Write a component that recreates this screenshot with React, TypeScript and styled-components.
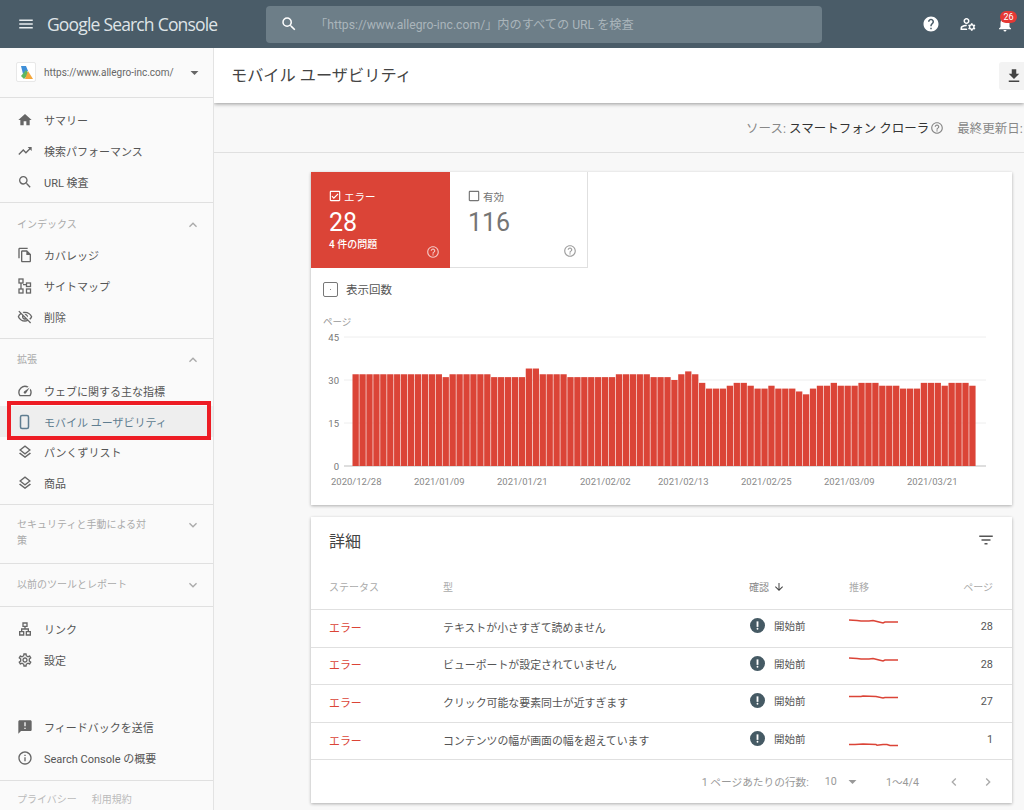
import React from 'react'
import styled, { createGlobalStyle } from 'styled-components'
import {
  MdMenu, MdSearch, MdHelp, MdHelpOutline, MdNotifications, MdOutlineManageAccounts, MdArrowDropDown,
  MdHome, MdTrendingUp, MdExpandLess, MdExpandMore, MdOutlineFileCopy, MdOutlineVisibilityOff, MdOutlineSpeed,
  MdOutlineLayers, MdOutlineLan, MdOutlineSettings, MdAnnouncement, MdInfoOutline,
  MdFileDownload, MdOutlineCheckBox, MdCheckBoxOutlineBlank, MdFilterList, MdArrowDownward, MdPriorityHigh,
  MdChevronLeft, MdChevronRight,
} from 'react-icons/md'

const GlobalStyle = createGlobalStyle`
  html, body { margin: 0; padding: 0; height: 100%; overflow: hidden; }
  body { font-family: Roboto, "Noto Sans CJK JP", sans-serif; background: #f8f8f8; color: #444; }
  * { box-sizing: border-box; }
`

const Page = styled.div`
  width: 1024px;
  height: 810px;
  display: flex;
  flex-direction: column;
  overflow: hidden;
`

const Header = styled.header`
  height: 48px;
  flex: none;
  display: flex;
  align-items: center;
  background: #4a5c68;
  color: #fff;
`

const MenuButton = styled.div`
  width: 47px;
  padding-left: 17px;
  display: flex;
  color: #e8ecee;
`

const Logo = styled.div`
  width: 219px;
  display: flex;
  gap: 4px;
  font-family: "Open Sans", sans-serif;
  font-size: 17.5px;
  letter-spacing: -0.85px;
  color: #dfe4e7;
  white-space: nowrap;
`

const SearchBox = styled.div`
  width: 556px;
  height: 37px;
  display: flex;
  align-items: center;
  gap: 17px;
  padding-left: 14px;
  border-radius: 4px;
  background: #6d7e88;
  color: #fff;
  font-size: 12.2px;
`

const SearchHint = styled.span`
  color: #aab5bb;
`

const HeaderIcons = styled.div`
  margin-left: 100px;
  display: flex;
  align-items: center;
  gap: 19px;
`

const Bell = styled.div`
  position: relative;
  display: flex;
`

const Badge = styled.span`
  position: absolute;
  top: -4px;
  left: 4px;
  width: 17px;
  height: 12px;
  border-radius: 6px;
  background: #e53935;
  color: #fff;
  font-size: 9px;
  line-height: 12px;
  text-align: center;
`

const Body = styled.div`
  flex: 1;
  min-height: 0;
  display: flex;
`

const Sidebar = styled.nav`
  width: 214px;
  flex: none;
  display: flex;
  flex-direction: column;
  background: #fafafa;
  border-right: 1px solid #e3e3e3;
`

const PropertyRow = styled.div`
  height: 50px;
  flex: none;
  display: flex;
  align-items: center;
  padding: 0 9px 1px 16px;
  border-bottom: 1px solid #e0e0e0;
  font-size: 10px;
  color: #666;
`

const Favicon = styled.div`
  width: 20px;
  height: 20px;
  flex: none;
  margin-right: 8px;
  display: flex;
  align-items: center;
  justify-content: center;
  background: #fff;
  border: 1px solid #e8e8e8;
  border-radius: 2px;
`

const PropertyName = styled.span`
  flex: 1;
  white-space: nowrap;
`

const NavGroup = styled.div<{ $top?: number; $bottom?: number }>`
  flex: none;
  padding: ${p => p.$top ?? 0}px 0 ${p => p.$bottom ?? 5.5}px;
  border-bottom: 1px solid #e0e0e0;
`

const PlainGroup = styled.div`
  flex: none;
  padding-top: 7px;
`

const Spacer = styled.div`
  flex: 1;
`

const NavItem = styled.div<{ $active?: boolean }>`
  position: relative;
  height: 30.7px;
  display: flex;
  align-items: center;
  gap: 11px;
  padding-left: 17px;
  font-size: 11px;
  white-space: nowrap;
  color: ${p => (p.$active ? '#5f7d90' : '#555')};
  background: ${p => (p.$active ? '#eeeeee' : 'transparent')};

  svg {
    flex: none;
    color: ${p => (p.$active ? '#5f7d90' : '#666')};
  }
`

const Highlight = styled.div`
  position: absolute;
  left: 7px;
  top: -5.5px;
  width: 204px;
  height: 39px;
  border: 4.5px solid #ed1c24;
  pointer-events: none;
`

const SectionHead = styled.div`
  height: 37px;
  padding: 6px 12px 0 17px;
  display: flex;
  align-items: center;
  justify-content: space-between;
  font-size: 10px;
  line-height: 16px;
  color: #aaa;

  svg {
    flex: none;
    color: #aaa;
  }
`

const CollapsedHead = styled(SectionHead)`
  height: 42px;
  padding-top: 0;
`

const WrappedHead = styled(SectionHead)`
  height: 58px;
  padding: 12px 12px 12px 17px;
  align-items: flex-start;
`

const SectionLabel = styled.span`
  width: 132px;
`

const SideFooter = styled.div`
  flex: none;
  height: 30px;
  margin-top: 7px;
  padding: 10px 0 0 17px;
  display: flex;
  gap: 15px;
  border-top: 1px solid #e0e0e0;
  font-size: 10px;
  color: #bbb;
`

const Main = styled.main`
  flex: 1;
  min-width: 0;
  display: flex;
  flex-direction: column;
  overflow: hidden;
`

const TitleBar = styled.div`
  height: 55px;
  flex: none;
  display: flex;
  align-items: center;
  justify-content: space-between;
  padding: 0 0 0 17px;
  background: #fff;
  box-shadow: 0 1px 4px rgba(0, 0, 0, 0.4);
  z-index: 1;
`

const Title = styled.h1`
  margin: 0 0 3px;
  font-size: 16.2px;
  font-weight: 400;
  color: #444;
`

const DownloadButton = styled.div`
  width: 35px;
  height: 28px;
  flex: none;
  margin-right: -10px;
  padding-left: 6px;
  display: flex;
  align-items: center;
  border-radius: 3px;
  background: #f3f3f3;
  color: #444;
`

const SourceBar = styled.div`
  height: 50px;
  flex: none;
  display: flex;
  align-items: center;
  padding-left: 532px;
  border-bottom: 1px solid #e0e0e0;
  font-size: 12.5px;
  white-space: nowrap;
  color: #333;
`

const Muted = styled.span`
  color: #888;
`

const SourceHelp = styled.span`
  display: flex;
  margin: 0 13px 0 1px;
  color: #888;
`

const Content = styled.div`
  width: 701px;
  margin-left: 97px;
  padding-top: 19px;
  display: flex;
  flex-direction: column;
  gap: 12px;
`

const Card = styled.section`
  background: #fff;
  box-shadow: 0 1px 3px rgba(0, 0, 0, 0.3);
`

const Tabs = styled.div`
  display: flex;
`

const Tab = styled.div<{ $error?: boolean }>`
  position: relative;
  width: ${p => (p.$error ? 139 : 138)}px;
  height: 96px;
  padding: 17px 0 0 17px;
  background: ${p => (p.$error ? '#db4437' : '#fff')};
  color: ${p => (p.$error ? '#fff' : '#757575')};
  border-right: ${p => (p.$error ? 'none' : '1px solid #e0e0e0')};
  border-bottom: ${p => (p.$error ? 'none' : '1px solid #e0e0e0')};
`

const TabLabel = styled.div`
  display: flex;
  align-items: center;
  gap: 2px;
  height: 14px;
  font-size: 10.5px;
`

const TabValue = styled.div`
  margin: 3px 0 0 1px;
  font-size: 25px;
  line-height: 33px;
`

const TabNote = styled.div`
  margin-left: 1px;
  font-size: 10px;
  font-weight: 500;
  line-height: 12px;
`

const TabHelp = styled.span`
  position: absolute;
  right: 10px;
  bottom: 9px;
  display: flex;
  opacity: 0.7;
`

const MetricRow = styled.div`
  height: 42px;
  display: flex;
  align-items: center;
  gap: 8px;
  padding-left: 12px;
  font-size: 11.5px;
  color: #555;
`

const MetricBox = styled.span`
  width: 15px;
  height: 15px;
  display: flex;
  align-items: center;
  justify-content: center;
  border: 1.5px solid #777;
  border-radius: 2px;

  &::after {
    content: '';
    width: 1px;
    height: 1px;
    background: #888;
  }
`

const AxisTitle = styled.div`
  height: 20px;
  padding: 6px 0 0 12px;
  font-size: 9.5px;
  line-height: 12px;
  color: #999;
`

const Chart = styled.svg`
  display: block;
  margin-bottom: 10px;
  font-family: Roboto, sans-serif;
  font-size: 9.5px;
`

const CardHead = styled.div`
  height: 48px;
  display: flex;
  align-items: center;
  justify-content: space-between;
  padding: 0 17px 3px 18px;
  color: #555;
`

const CardTitle = styled.h2`
  margin: 0;
  font-size: 16px;
  font-weight: 400;
  color: #444;
`

const Columns = styled.div`
  display: grid;
  grid-template-columns: 115px 305px 100px 80px 1fr;
  align-items: center;
  padding: 0 19px 0 18px;
`

const TableHead = styled(Columns)`
  height: 45px;
  padding-bottom: 1px;
  border-bottom: 1px solid #e0e0e0;
  font-size: 10px;
  color: #aaa;
`

const SortHead = styled.span`
  display: flex;
  align-items: center;
  gap: 4px;
  color: #888;

  svg {
    color: #444;
  }
`

const Right = styled.span`
  text-align: right;
`

const Row = styled(Columns)`
  height: 37.6px;
  padding-bottom: 3px;
  border-bottom: 1px solid #e0e0e0;
  font-size: 10.9px;
  color: #555;
`

const StatusError = styled.span`
  color: #db4437;
`

const TypeName = styled.span`
  margin-left: -1px;
`

const Pending = styled.span`
  display: flex;
  align-items: center;
  gap: 9px;
  margin: -2px 0 0 1px;
  font-size: 10.5px;
`

const PendingDot = styled.span`
  width: 15px;
  height: 15px;
  display: flex;
  align-items: center;
  justify-content: center;
  border-radius: 50%;
  background: #455a64;
  color: #fff;
`

const Spark = styled.svg`
  display: block;
  align-self: start;
  margin-bottom: -8px;
`

const Pager = styled.div`
  height: 43px;
  display: flex;
  align-items: center;
  justify-content: flex-end;
  padding-right: 16px;
  font-size: 10.7px;
  color: #999;
`

const PageSize = styled.span`
  display: flex;
  align-items: center;
  gap: 6px;
  margin: 0 24px 0 16px;
`

const PagerNav = styled.span`
  display: flex;
  gap: 18px;
  margin-left: 27px;
  color: #aaa;
`

const bars = [
  32, 32, 32, 32, 32, 32, 32, 32, 32, 32, 32, 32, 32, 31, 32, 32, 32, 32, 32, 32, 31, 31, 31, 31, 31, 34, 34, 32, 32, 32,
  32, 31, 31, 31, 31, 31, 31, 31, 32, 32, 32, 32, 32, 31, 31, 31, 30, 32, 33, 32, 29, 27, 27, 27, 28, 29, 29, 28, 27, 27,
  28, 27, 27, 27, 26, 25, 27, 28, 28, 29, 28, 28, 28, 29, 29, 29, 28, 28, 28, 27, 27, 27, 29, 29, 29, 28, 29, 29, 29, 28,
]

const ticks = [
  { label: '45', y: 7 },
  { label: '30', y: 50 },
  { label: '15', y: 93 },
  { label: '0', y: 136 },
]

const dates = [
  { label: '2020/12/28', x: 20 },
  { label: '2021/01/09', x: 103 },
  { label: '2021/01/21', x: 186 },
  { label: '2021/02/02', x: 269 },
  { label: '2021/02/13', x: 347 },
  { label: '2021/02/25', x: 430 },
  { label: '2021/03/09', x: 513 },
  { label: '2021/03/21', x: 596 },
]

const BarChart = () => (
  <Chart width={701} height={165}>
    {ticks.map(t => (
      <g key={t.label}>
        <line x1={33} x2={675} y1={t.y} y2={t.y} stroke={t.y === 136 ? '#bdbdbd' : '#eeeeee'} />
        <text x={28} y={t.y + 3.5} textAnchor="end" fill="#777">{t.label}</text>
      </g>
    ))}
    {bars.map((v, i) => (
      <rect key={i} x={41.5 + i * 6.93} y={136 - v * 2.867} width={6.3} height={v * 2.867} fill="#db4437" />
    ))}
    {dates.map(d => (
      <text key={d.label} x={d.x} y={155} fill="#888">{d.label}</text>
    ))}
  </Chart>
)

const SitemapIcon = () => (
  <svg width="16" height="16" viewBox="0 0 16 16" fill="none" stroke="#666" strokeWidth="1.3">
    <rect x="2" y="1" width="4" height="4" />
    <rect x="2" y="11" width="4" height="4" />
    <rect x="9.5" y="5" width="4" height="3.5" />
    <rect x="9.5" y="11" width="4" height="4" />
    <path d="M4 5v6M6 6.7h3.5" />
  </svg>
)

const PhoneIcon = () => (
  <svg width="16" height="16" viewBox="0 0 16 16" fill="none" stroke="#5f7d90" strokeWidth="1.5">
    <rect x="3.5" y="1.5" width="8" height="13" rx="1.5" />
  </svg>
)

const FaviconMark = () => (
  <svg width="15" height="15" viewBox="0 0 15 15">
    <path d="M2 1h5l2 5-5 3z" fill="#3f8fd8" />
    <path d="M7 5l3 4-5 5-3-3z" fill="#5fb760" />
    <path d="M9 6l5 8H6z" fill="#f4a63a" />
  </svg>
)

const sparkRows = [
  { status: 'テキストが小さすぎて読めません', pages: 28, points: '0,10 8,10.5 12,11 20,11 24,10.5 28,11.5 34,13 36,12 49,12' },
  { status: 'ビューポートが設定されていません', pages: 28, points: '0,10 8,10.5 12,11 20,11 24,10.5 28,11.5 34,13 36,12 49,12' },
  { status: 'クリック可能な要素同士が近すぎます', pages: 27, points: '0,11.5 12,11.5 14,11 27,11.5 34,13 36,12.5 49,12.5' },
  { status: 'コンテンツの幅が画面の幅を超えています', pages: 1, points: '0,21.5 6,21.5 14,21 27,21.5 28,22.3 34,21.5 38,21.5 41,22.5 49,22.5' },
]

const App = () => (
  <Page>
    <GlobalStyle />
    <Header>
      <MenuButton><MdMenu size={18} /></MenuButton>
      <Logo><span>Google</span><span>Search</span><span>Console</span></Logo>
      <SearchBox>
        <MdSearch size={18} />
        <SearchHint>「https://www.allegro-inc.com/」内のすべての URL を検査</SearchHint>
      </SearchBox>
      <HeaderIcons>
        <MdHelp size={18} />
        <MdOutlineManageAccounts size={18} />
        <Bell>
          <MdNotifications size={18} />
          <Badge>26</Badge>
        </Bell>
      </HeaderIcons>
    </Header>
    <Body>
      <Sidebar>
        <PropertyRow>
          <Favicon><FaviconMark /></Favicon>
          <PropertyName>https://www.allegro-inc.com/</PropertyName>
          <MdArrowDropDown size={19} />
        </PropertyRow>
        <NavGroup $top={7} $bottom={5}>
          <NavItem><MdHome size={16} />サマリー</NavItem>
          <NavItem><MdTrendingUp size={16} />検索パフォーマンス</NavItem>
          <NavItem><MdSearch size={16} />URL 検査</NavItem>
        </NavGroup>
        <NavGroup>
          <SectionHead>インデックス<MdExpandLess size={16} /></SectionHead>
          <NavItem><MdOutlineFileCopy size={16} />カバレッジ</NavItem>
          <NavItem><SitemapIcon />サイトマップ</NavItem>
          <NavItem><MdOutlineVisibilityOff size={16} />削除</NavItem>
        </NavGroup>
        <NavGroup>
          <SectionHead>拡張<MdExpandLess size={16} /></SectionHead>
          <NavItem><MdOutlineSpeed size={16} />ウェブに関する主な指標</NavItem>
          <NavItem $active>
            <PhoneIcon />モバイル ユーザビリティ
            <Highlight />
          </NavItem>
          <NavItem><MdOutlineLayers size={16} />パンくずリスト</NavItem>
          <NavItem><MdOutlineLayers size={16} />商品</NavItem>
        </NavGroup>
        <NavGroup $bottom={0}>
          <WrappedHead>
            <SectionLabel>セキュリティと手動による対策</SectionLabel>
            <MdExpandMore size={16} />
          </WrappedHead>
        </NavGroup>
        <NavGroup $bottom={0}>
          <CollapsedHead>以前のツールとレポート<MdExpandMore size={16} /></CollapsedHead>
        </NavGroup>
        <PlainGroup>
          <NavItem><MdOutlineLan size={16} />リンク</NavItem>
          <NavItem><MdOutlineSettings size={16} />設定</NavItem>
        </PlainGroup>
        <Spacer />
        <PlainGroup>
          <NavItem><MdAnnouncement size={16} />フィードバックを送信</NavItem>
          <NavItem><MdInfoOutline size={16} />Search Console の概要</NavItem>
        </PlainGroup>
        <SideFooter><span>プライバシー</span><span>利用規約</span></SideFooter>
      </Sidebar>
      <Main>
        <TitleBar>
          <Title>モバイル ユーザビリティ</Title>
          <DownloadButton><MdFileDownload size={18} /></DownloadButton>
        </TitleBar>
        <SourceBar>
          <Muted>ソース:&nbsp;</Muted>スマートフォン クローラ
          <SourceHelp><MdHelpOutline size={14} /></SourceHelp>
          <Muted>最終更新日:</Muted>
        </SourceBar>
        <Content>
          <Card>
            <Tabs>
              <Tab $error>
                <TabLabel><MdOutlineCheckBox size={14} />エラー</TabLabel>
                <TabValue>28</TabValue>
                <TabNote>4 件の問題</TabNote>
                <TabHelp><MdHelpOutline size={14} /></TabHelp>
              </Tab>
              <Tab>
                <TabLabel><MdCheckBoxOutlineBlank size={14} />有効</TabLabel>
                <TabValue>116</TabValue>
                <TabHelp><MdHelpOutline size={14} /></TabHelp>
              </Tab>
            </Tabs>
            <MetricRow><MetricBox />表示回数</MetricRow>
            <AxisTitle>ページ</AxisTitle>
            <BarChart />
          </Card>
          <Card>
            <CardHead>
              <CardTitle>詳細</CardTitle>
              <MdFilterList size={18} />
            </CardHead>
            <TableHead>
              <span>ステータス</span>
              <TypeName>型</TypeName>
              <SortHead>確認<MdArrowDownward size={12} /></SortHead>
              <span>推移</span>
              <Right>ページ</Right>
            </TableHead>
            {sparkRows.map(r => (
              <Row key={r.status}>
                <StatusError>エラー</StatusError>
                <TypeName>{r.status}</TypeName>
                <Pending>
                  <PendingDot><MdPriorityHigh size={11} /></PendingDot>
                  開始前
                </Pending>
                <Spark width={49} height={36} viewBox="0 0 49 36">
                  <polyline points={r.points} fill="none" stroke="#db4437" strokeWidth="1.5" />
                </Spark>
                <Right>{r.pages}</Right>
              </Row>
            ))}
            <Pager>
              1 ページあたりの行数:
              <PageSize>10<MdArrowDropDown size={19} /></PageSize>
              1〜4/4
              <PagerNav><MdChevronLeft size={16} /><MdChevronRight size={16} /></PagerNav>
            </Pager>
          </Card>
        </Content>
      </Main>
    </Body>
  </Page>
)

export default App
